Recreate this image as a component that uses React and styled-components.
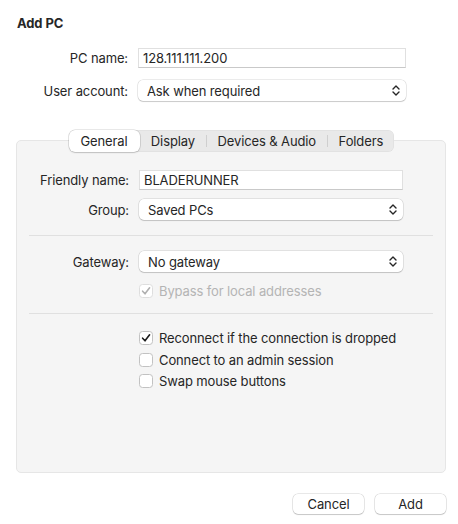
import React from 'react'
import styled, { createGlobalStyle } from 'styled-components'

const GlobalStyle = createGlobalStyle`
  html, body {
    margin: 0;
    background: #ffffff;
  }
  body {
    font-family: Inter, "Noto Sans", sans-serif;
    font-size: 13px;
    letter-spacing: -0.12px;
    color: #262626;
    -webkit-font-smoothing: antialiased;
  }
`

const tabs = ['General', 'Display', 'Devices & Audio', 'Folders']

const Chevrons = () => (
  <svg width="8" height="11" viewBox="0 0 8 11" fill="none">
    <path d="M1 4 L4 1 L7 4" stroke="#262626" strokeWidth="1.4" strokeLinecap="round" strokeLinejoin="round" />
    <path d="M1 7 L4 10 L7 7" stroke="#262626" strokeWidth="1.4" strokeLinecap="round" strokeLinejoin="round" />
  </svg>
)

const Check = ({ muted }) => (
  <svg width="10" height="10" viewBox="0 0 10 10" fill="none">
    <path d="M1.6 5.2 L4 7.8 L8.6 1.8" stroke={muted ? '#b0b0b0' : '#1c1c1c'} strokeWidth="1.6" strokeLinecap="round" strokeLinejoin="round" />
  </svg>
)

const Field = ({ label, children, narrow }) => (
  <Row>
    <Label>{label}</Label>
    <Control narrow={narrow}>{children}</Control>
  </Row>
)

const Select = ({ value }) => (
  <SelectBox>
    <span>{value}</span>
    <Chevrons />
  </SelectBox>
)

const CheckRow = ({ checked, disabled, children }) => (
  <CheckLine disabled={disabled}>
    <Box disabled={disabled}>{checked && <Check muted={disabled} />}</Box>
    <span>{children}</span>
  </CheckLine>
)

const App = () => {
  return (
    <Sheet>
      <GlobalStyle />
      <Title>Add PC</Title>
      <Form>
        <Field label="PC name:">
          <TextBox>128.111.111.200</TextBox>
        </Field>
        <Field label="User account:">
          <Select value="Ask when required" />
        </Field>
      </Form>

      <TabArea>
        <TabBar>
          {tabs.map((t, i) => (
            <Tab key={t} active={i === 0} divider={i > 1}>
              {t}
            </Tab>
          ))}
        </TabBar>
        <Panel>
          <Section>
            <Field label="Friendly name:" narrow>
              <TextBox>BLADERUNNER</TextBox>
            </Field>
            <Field label="Group:" narrow>
              <Select value="Saved PCs" />
            </Field>
          </Section>
          <Divider />
          <Section gap={11}>
            <Field label="Gateway:" narrow>
              <Select value="No gateway" />
            </Field>
            <Indent>
              <CheckRow checked disabled>Bypass for local addresses</CheckRow>
            </Indent>
          </Section>
          <Divider top={14} bottom={16} />
          <Section gap={5.5}>
            <Indent>
              <CheckRow checked>Reconnect if the connection is dropped</CheckRow>
            </Indent>
            <Indent>
              <CheckRow>Connect to an admin session</CheckRow>
            </Indent>
            <Indent>
              <CheckRow>Swap mouse buttons</CheckRow>
            </Indent>
          </Section>
        </Panel>
      </TabArea>

      <Footer>
        <Button>Cancel</Button>
        <Button>Add</Button>
      </Footer>
    </Sheet>
  )
}

export default App

const Sheet = styled.div`
  width: 458px;
  height: 524px;
  box-sizing: border-box;
  padding: 15px 12px 0 16px;
  display: flex;
  flex-direction: column;
`

const Title = styled.div`
  font-weight: 700;
  font-size: 13px;
  line-height: 16px;
  padding-left: 1px;
`

const Form = styled.div`
  margin-top: 17px;
  display: flex;
  flex-direction: column;
  gap: 12px;
`

const Row = styled.div`
  display: flex;
  align-items: center;
`

const Label = styled.div`
  width: 112px;
  text-align: right;
  white-space: nowrap;
  flex-shrink: 0;
`

const Control = styled.div`
  margin-left: 10px;
  width: ${p => (p.narrow ? 264 : 268)}px;
`

const TextBox = styled.div`
  height: 20px;
  box-sizing: border-box;
  background: #ffffff;
  border: 1px solid #e0e0e0;
  border-bottom-color: #c9c9c9;
  padding: 0 4px;
  line-height: 18px;
  white-space: nowrap;
`

const SelectBox = styled.div`
  height: 21px;
  box-sizing: border-box;
  background: #ffffff;
  border-radius: 5px;
  box-shadow: 0 0 0 0.5px rgba(0, 0, 0, 0.16), 0 1px 1px rgba(0, 0, 0, 0.14);
  display: flex;
  align-items: center;
  justify-content: space-between;
  padding: 0 6px 0 9px;
  white-space: nowrap;
`

const TabArea = styled.div`
  margin-top: 29px;
  display: flex;
  flex-direction: column;
  align-items: center;
`

const TabBar = styled.div`
  display: flex;
  align-items: center;
  height: 22px;
  box-sizing: border-box;
  background: #e9e9e9;
  border-radius: 6px;
  box-shadow: inset 0 0 0 0.5px rgba(0, 0, 0, 0.06);
  position: relative;
  z-index: 1;
  margin-bottom: -12px;
  margin-left: 1px;
`

const Tab = styled.div`
  height: 22px;
  box-sizing: border-box;
  display: flex;
  align-items: center;
  padding: 0 ${p => (p.active ? 12 : 11.3)}px;
  white-space: nowrap;
  position: relative;
  ${p => p.active && `
    background: #ffffff;
    border-radius: 6px;
    box-shadow: 0 0 0 0.5px rgba(0, 0, 0, 0.18), 0 1px 1.5px rgba(0, 0, 0, 0.14);
  `}
  ${p => p.divider && `
    &::before {
      content: '';
      position: absolute;
      left: 0;
      top: 5px;
      bottom: 5px;
      width: 1px;
      background: #cfcfcf;
    }
  `}
`

const Panel = styled.div`
  align-self: stretch;
  height: 333px;
  box-sizing: border-box;
  background: #f5f5f5;
  border: 1px solid #e6e6e6;
  border-radius: 5px;
  padding-top: 29px;
  display: flex;
  flex-direction: column;
`

const Section = styled.div`
  display: flex;
  flex-direction: column;
  gap: ${p => p.gap ?? 9}px;
`

const Divider = styled.div`
  height: 1px;
  background: #e0e0e0;
  margin: ${p => p.top ?? 15}px 12px ${p => p.bottom ?? 15}px 12px;
`

const Indent = styled.div`
  padding-left: 122px;
`

const CheckLine = styled.div`
  display: flex;
  align-items: center;
  gap: 6px;
  height: 16px;
  color: ${p => (p.disabled ? '#b4b4b4' : '#262626')};
  white-space: nowrap;
`

const Box = styled.div`
  width: 14px;
  height: 14px;
  box-sizing: border-box;
  border-radius: 3.5px;
  background: #ffffff;
  border: 1px solid ${p => (p.disabled ? '#dedede' : '#c2c2c2')};
  display: flex;
  align-items: center;
  justify-content: center;
`

const Footer = styled.div`
  margin-top: 21px;
  display: flex;
  justify-content: flex-end;
  gap: 11px;
`

const Button = styled.div`
  width: 71px;
  height: 20px;
  box-sizing: border-box;
  background: #ffffff;
  border-radius: 5px;
  box-shadow: 0 0 0 0.5px rgba(0, 0, 0, 0.18), 0 1px 1px rgba(0, 0, 0, 0.14);
  display: flex;
  align-items: center;
  justify-content: center;
`
